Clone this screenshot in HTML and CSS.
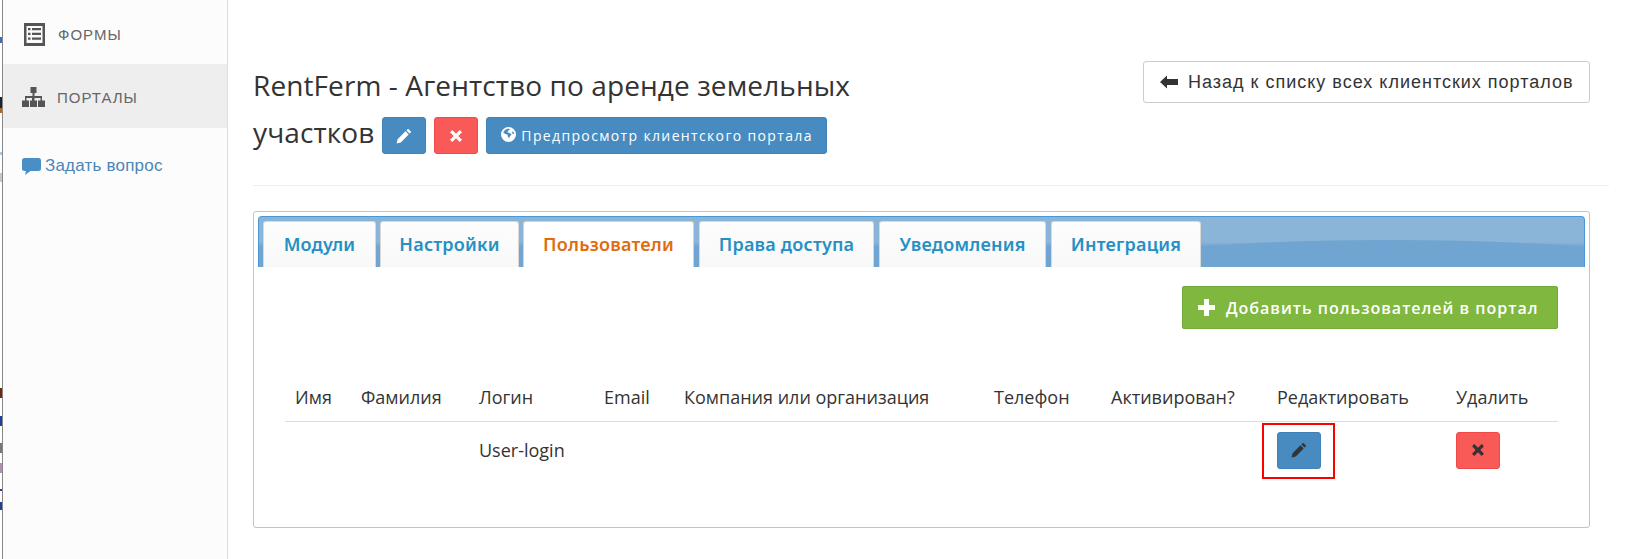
FILE: index.html
```html
<!DOCTYPE html>
<html lang="ru">
<head>
<meta charset="utf-8">
<title>RentFerm</title>
<link rel="stylesheet" href="styles.css">
</head>
<body>
<aside class="sidebar">
  <nav class="menu">
    <a class="menu-item first">
      <svg class="menu-icon forms" viewBox="0 0 21 23"><path fill-rule="evenodd" fill="#555" d="M0 0h21v23H0zM2.500 3v17h16V3z"/><path fill="#555" d="M4 5h2.500v2.200H4zM8 5h9v2.200H8zM4 9.800h2.500V12H4zM8 9.800h9V12H8zM4 14.500h2.500v2.200H4zM8 14.500h9v2.200H8z"/></svg>
      <span>Формы</span>
    </a>
    <a class="menu-item active">
      <svg class="menu-icon portals" viewBox="0 0 23 20"><path fill="#555" d="M8.500 0h6v6h-2v3h7.500v4.500h3V20h-7v-6.500h2.500V11h-6v2.500h2.500V20h-7v-6.500H10V11H4.500v2.500H7V20H0v-6.500h3V9h7.500V6h-2z"/></svg>
      <span>Порталы</span>
    </a>
  </nav>
  <a class="ask">
    <svg class="ask-icon" viewBox="0 0 19 17"><path fill="#4a8ec6" d="M2.500 0h14A2.500 2.500 0 0 1 19 2.500v8a2.500 2.500 0 0 1-2.500 2.500H8.500L3 17l1-4H2.500A2.500 2.500 0 0 1 0 10.500v-8A2.500 2.500 0 0 1 2.500 0z"/></svg>
    <span>Задать вопрос</span>
  </a>
</aside>
<main class="main">
  <header class="page-head">
    <h1 class="title">
      <span class="title-line">RentFerm - Агентство по аренде земельных</span>
      <span class="title-row">
        <span class="title-line">участков</span>
        <span class="title-actions">
          <a class="btn btn-blue btn-icon"><svg class="ico-pencil" viewBox="0 0 14 14"><path fill="#fff" d="M10.600.6l2.800 2.800-1.500 1.500-2.800-2.800zM8.300 2.900l2.800 2.800-6.900 6.900-3.700.9.900-3.700z"/></svg></a>
          <a class="btn btn-red btn-icon"><svg class="ico-x" viewBox="0 0 14 14"><path fill="#fff" d="M3.300 1L7 4.700 10.700 1 13 3.300 9.300 7l3.700 3.700-2.300 2.300L7 9.300 3.300 13 1 10.700 4.700 7 1 3.300z"/></svg></a>
          <a class="btn btn-blue btn-preview"><svg class="ico-globe" viewBox="0 0 14 14"><path fill-rule="evenodd" fill="#fff" d="M7 0a7 7 0 1 1 0 14A7 7 0 0 1 7 0zM4 2.500L2 5l2 1.500 2 .5.500 2 1 1.500 1-2 1.500-1.500L8 5.500 6 5l.5-1.500 2-1L7 1.500zM11 4l-1 1.500 1.500 1 1-.5z"/></svg><span>Предпросмотр клиентского портала</span></a>
        </span>
      </span>
    </h1>
    <a class="btn-back"><svg class="ico-back" viewBox="0 0 18 14"><path fill="#333" d="M0 7l7-6.500V4h11v6H7v3.500z"/></svg><span>Назад к списку всех клиентских порталов</span></a>
  </header>
  <hr class="rule">
  <section class="panel">
    <div class="tabbar">
      <a class="tab t1">Модули</a>
      <a class="tab t2">Настройки</a>
      <a class="tab t3 current">Пользователи</a>
      <a class="tab t4">Права доступа</a>
      <a class="tab t5">Уведомления</a>
      <a class="tab t6">Интеграция</a>
    </div>
    <div class="panel-body">
      <div class="actions">
        <a class="btn-add"><svg class="ico-plus" viewBox="0 0 17 17"><path fill="#fff" d="M6 0h5v6h6v5h-6v6H6v-6H0V6h6z"/></svg><span>Добавить пользователей в портал</span></a>
      </div>
      <table class="users">
        <colgroup>
          <col class="c1"><col class="c2"><col class="c3"><col class="c4"><col class="c5"><col class="c6"><col class="c7"><col class="c8"><col class="c9">
        </colgroup>
        <thead>
          <tr><th>Имя</th><th>Фамилия</th><th>Логин</th><th>Email</th><th>Компания или организация</th><th>Телефон</th><th>Активирован?</th><th>Редактировать</th><th>Удалить</th></tr>
        </thead>
        <tbody>
          <tr>
            <td></td><td></td><td>User-login</td><td></td><td></td><td></td><td></td>
            <td><a class="btn btn-blue btn-icon marked"><svg class="ico-pencil" viewBox="0 0 14 14"><path fill="#333" d="M10.600.6l2.800 2.800-1.500 1.500-2.800-2.800zM8.300 2.900l2.800 2.800-6.900 6.900-3.700.9.900-3.700z"/></svg></a></td>
            <td><a class="btn btn-red btn-icon"><svg class="ico-x" viewBox="0 0 14 14"><path fill="#333" d="M3.300 1L7 4.700 10.700 1 13 3.300 9.300 7l3.700 3.700-2.300 2.300L7 9.300 3.300 13 1 10.700 4.700 7 1 3.300z"/></svg></a></td>
          </tr>
        </tbody>
      </table>
    </div>
  </section>
</main>
</body>
</html>
```
FILE: styles.css
```css
* { box-sizing: border-box; }
html, body { height: 100%; }
body {
  margin: 0;
  display: flex;
  height: 559px;
  overflow: hidden;
  color: #333;
  font-family: "Open Sans", "Liberation Sans", sans-serif;
  background:
    linear-gradient(to bottom,
      #fff 37px, #3a6fc0 37px 43px, #fff 43px 97px, #1a2430 97px 108px, #b06a20 108px 113px,
      #fff 113px 152px, #a8cbe8 152px 155px, #fff 155px 173px, #c8c8c8 173px 182px,
      #fff 182px 388px, #6e2a10 388px 398px, #fff 398px 416px, #1f3f9a 416px 426px,
      #fff 426px 443px, #777 443px 453px, #fff 453px 463px, #b090b0 463px 473px,
      #fff 473px 489px, #2040b0 489px 491px, #fff 491px 502px, #1f3f9a 502px 510px, #fff 510px)
    0 0 / 2px 100% no-repeat #fff;
}
.sidebar {
  width: 226px;
  flex: none;
  margin-left: 2px;
  background: #fcfcfc;
  border-left: 1px solid #888;
  border-right: 1px solid #ddd;
}
.menu { display: flex; flex-direction: column; }
.menu-item {
  height: 64px;
  padding-top: 2px;
  display: flex;
  align-items: center;
  font: 15px "Liberation Sans", sans-serif;
  letter-spacing: 1px;
  text-transform: uppercase;
  color: #666;
}
.menu-item.first { padding-top: 4px; }
.menu-item.active { background: #eee; }
.menu-icon { flex: none; display: block; }
.menu-icon.forms { width: 21px; height: 23px; margin: 0 13px 0 21px; }
.menu-icon.portals { width: 23px; height: 20px; margin: 0 12px 0 19px; }
.ask {
  display: flex;
  align-items: center;
  margin: 28px 0 0 19px;
  font: 17px/20px "Liberation Sans", sans-serif;
  letter-spacing: .2px;
  color: #4a86b8;
}
.ask-icon { width: 19px; height: 17px; margin-right: 4px; }
.main { flex: none; width: 1381px; padding: 61px 0 0 25px; }
.page-head { display: flex; justify-content: space-between; align-items: flex-start; padding-right: 19px; }
.title {
  margin: 1px 0 0;
  width: 640px;
  font-size: 28px;
  letter-spacing: .1px;
  font-weight: 400;
  line-height: 47px;
  color: #333;
}
.title-line { display: block; white-space: nowrap; }
.title-row { display: flex; align-items: flex-start; }
.title-actions { display: flex; gap: 8px; margin: 8px 0 0 8px; }
.btn {
  display: inline-flex;
  align-items: center;
  justify-content: center;
  height: 37px;
  border-radius: 3px;
}
.btn-blue { background: #478bc1; border: 1px solid #3f82b8; }
.btn-red { background: #f95a58; border: 1px solid #f04a48; }
.btn-icon { width: 44px; }
.ico-pencil { width: 16px; height: 16px; display: block; }
.ico-x { width: 14px; height: 14px; display: block; }
.btn-preview {
  width: 341px;
  justify-content: flex-start;
  padding-left: 14px;
  font-size: 14px;
  line-height: 20px;
  letter-spacing: 1.35px;
  color: #fff;
}
.ico-globe { width: 15px; height: 15px; margin: 0 5px 3px 0; flex: none; }
.btn-back {
  width: 447px;
  height: 42px;
  display: flex;
  align-items: center;
  padding-left: 16px;
  border: 1px solid #ccc;
  border-radius: 3px;
  font: 18px "Liberation Sans", sans-serif;
  letter-spacing: 1px;
  color: #333;
}
.ico-back { width: 18px; height: 14px; margin-right: 10px; flex: none; }
.rule { margin: 29px 0 0; border: 0; border-top: 1px solid #eee; }
.panel {
  width: 1337px;
  height: 317px;
  margin-top: 25px;
  padding: 4px;
  border: 1px solid #c4c4c4;
  border-radius: 3px;
}
.tabbar {
  position: relative;
  display: flex;
  height: 51px;
  gap: 4px;
  padding: 4px 0 0 4px;
  overflow: hidden;
  background: linear-gradient(#8ab5d8 0 25px, #6fa5d0 30px);
  border: 1px solid #4d97d6;
  border-bottom: 0;
  border-radius: 4px 4px 0 0;
}
.tabbar::before {
  content: "";
  position: absolute;
  left: 530px;
  width: 1200px;
  top: 23px;
  height: 240px;
  border-radius: 50%;
  background: #6fa5d0;
}
.tab {
  position: relative;
  display: flex;
  align-items: center;
  justify-content: center;
  height: 46px;
  padding-bottom: 2px;
  background: linear-gradient(#fdfdfd, #f8f8f8);
  border: 1px solid #d9d9d9;
  border-bottom: 0;
  border-radius: 3px 3px 0 0;
  font-family: "Noto Sans", sans-serif;
  font-size: 18px;
  letter-spacing: .2px;
  font-weight: 600;
  color: #2590c4;
}
.t1 { width: 113px; }
.t2 { width: 139px; }
.t3 { width: 171px; }
.t4 { width: 175px; margin-left: 1px; }
.t5 { width: 167px; margin-left: 1px; }
.t6 { width: 150px; margin-left: 1px; }
.tab.current { background: #fff; border-color: #f5d766; color: #e06c0e; }
.panel-body { padding: 0 27px 0 27px; }
.actions { display: flex; justify-content: flex-end; padding-top: 19px; }
.btn-add {
  width: 376px;
  height: 43px;
  display: flex;
  align-items: center;
  padding-left: 15px;
  background: #7fb73f;
  border: 1px solid #74aa38;
  border-radius: 2px;
  font-size: 16px;
  font-weight: 600;
  letter-spacing: 1px;
  color: #fff;
}
.ico-plus { width: 17px; height: 17px; margin-right: 11px; flex: none; }
.users {
  width: 100%;
  margin-top: 32px;
  table-layout: fixed;
  border-collapse: collapse;
  font-size: 18px;
}
.c1 { width: 66px; }
.c2 { width: 118px; }
.c3 { width: 125px; }
.c4 { width: 80px; }
.c5 { width: 310px; }
.c6 { width: 117px; }
.c7 { width: 166px; }
.c8 { width: 179px; }
.users th {
  height: 60px;
  padding: 0 10px 12px;
  text-align: left;
  font-weight: 400;
  white-space: nowrap;
  vertical-align: bottom;
  border-bottom: 1px solid #ddd;
}
.users td { height: 58px; padding: 0 10px; vertical-align: middle; }
.marked { position: relative; }
.marked::after {
  content: "";
  position: absolute;
  left: -16px;
  right: -15px;
  top: -10px;
  bottom: -11px;
  border: 2px solid #f00;
}
```
